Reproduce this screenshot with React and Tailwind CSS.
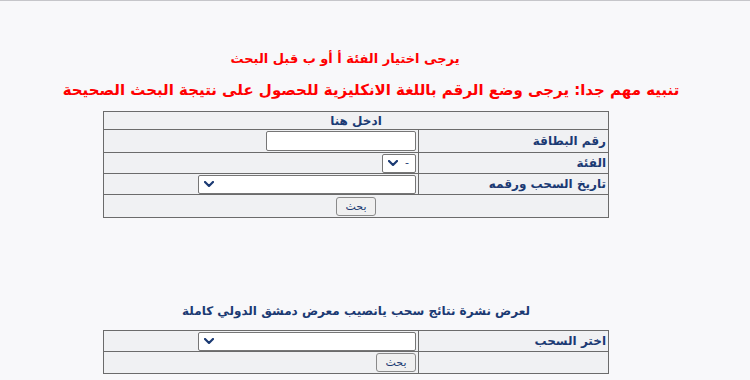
const Chevron = () => (
  <svg width="10" height="6" viewBox="0 0 10 6" className="shrink-0">
    <path d="M1 1 L5 5 L9 1" fill="none" stroke="#1b3a73" strokeWidth="2.2" strokeLinecap="round" strokeLinejoin="round" />
  </svg>
);

const Select = ({ width, value = '' }) => (
  <div
    className="flex h-[19px] items-center justify-between rounded-[2px] border border-[#767676] bg-white pl-[5px] pr-[6px] text-[11px] text-[#1b3a73]"
    style={{ width }}
  >
    <span>{value}</span>
    <Chevron />
  </div>
);

const Button = () => (
  <button className="h-[19px] w-[40px] rounded-[3px] border border-[#8a8a8a] bg-[#f0f0f0] text-[11px] leading-none text-[#1b3a73]">
    بحث
  </button>
);

const Label = ({ children }) => (
  <td className="w-[190px] border border-[#6b6b6b] px-[2px] py-0 text-right text-[12px] font-bold leading-[16px] text-[#1b3a73]">
    {children}
  </td>
);

const Cell = ({ children }) => (
  <td className="border border-[#6b6b6b] p-0 pr-[2px]">
    <div className="flex justify-start">{children}</div>
  </td>
);

export default function App() {
  return (
    <div dir="rtl" className="min-h-[380px] border-t border-[#c6c6ca] bg-[#f8f8fa] font-['DejaVu_Sans',sans-serif]">
      <div className="flex justify-center pt-[48px] pr-[60px]">
        <p className="text-[13px] font-bold leading-[20px] text-[#ff0000]">يرجى اختيار الفئة أ أو ب قبل البحث</p>
      </div>
      <div className="flex justify-center pt-[10px] pr-[8px]">
        <p className="text-[15px] font-bold leading-[22px] text-[#ff0000]">
          تنبيه مهم جدا: يرجى وضع الرقم باللغة الانكليزية للحصول على نتيجة البحث الصحيحة
        </p>
      </div>

      <div className="mr-[141px] mt-[10px] w-[506px]">
        <table className="w-full border-collapse bg-[#f0f1f3]">
          <tbody>
            <tr className="h-[18px]">
              <td colSpan={2} className="border border-[#6b6b6b] p-0 text-center text-[12px] font-bold leading-[14px] text-[#1b3a73]">
                ادخل هنا
              </td>
            </tr>
            <tr className="h-[23px]">
              <Label>رقم البطاقة</Label>
              <Cell>
                <input className="h-[20px] w-[150px] rounded-[2px] border border-[#767676] bg-white" />
              </Cell>
            </tr>
            <tr className="h-[21px]">
              <Label>الفئة</Label>
              <Cell>
                <Select width={34} value="-" />
              </Cell>
            </tr>
            <tr className="h-[21px]">
              <Label>تاريخ السحب ورقمه</Label>
              <Cell>
                <Select width={218} />
              </Cell>
            </tr>
            <tr className="h-[23px]">
              <td colSpan={2} className="border border-[#6b6b6b] p-0">
                <div className="flex justify-center">
                  <Button />
                </div>
              </td>
            </tr>
          </tbody>
        </table>
      </div>

      <div className="mr-[141px] mt-[84px] w-[506px] text-center">
        <p className="text-[12px] font-bold leading-[18px] text-[#1b3a73]">لعرض نشرة نتائج سحب يانصيب معرض دمشق الدولي كاملة</p>
      </div>

      <div className="mr-[141px] mt-[10px] w-[506px]">
        <table className="w-full border-collapse bg-[#f0f1f3]">
          <tbody>
            <tr className="h-[21px]">
              <Label>اختر السحب</Label>
              <Cell>
                <Select width={218} />
              </Cell>
            </tr>
            <tr className="h-[22px]">
              <td className="border border-[#6b6b6b] p-0"></td>
              <Cell>
                <Button />
              </Cell>
            </tr>
          </tbody>
        </table>
      </div>
    </div>
  );
}
